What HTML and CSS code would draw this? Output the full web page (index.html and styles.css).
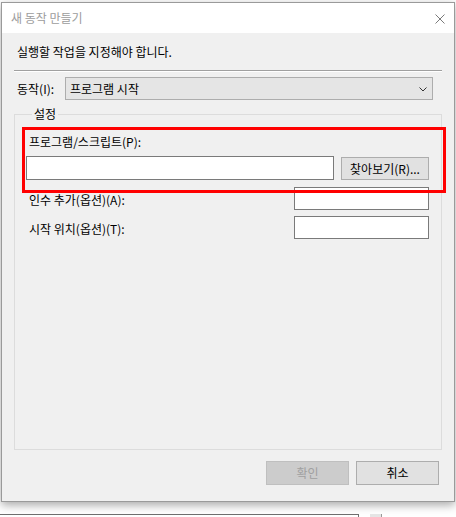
FILE: index.html
```html
<!DOCTYPE html>
<html>
<head>
  <meta charset="UTF-8">
  <title>새 동작 만들기</title>
  <link rel="stylesheet" href="styles.css">
</head>
<body>
  <div class="dialog">
    <header class="titlebar">
      <span class="title">새 동작 만들기</span>
      <svg class="close" width="10" height="10" viewBox="0 0 10 10">
        <path d="M0.5 0.5 L9.5 9.5 M9.5 0.5 L0.5 9.5" stroke="#7a7a7a" stroke-width="1" fill="none"/>
      </svg>
    </header>

    <div class="content">
      <p class="intro">실행할 작업을 지정해야 합니다.</p>
      <div class="separator"></div>

      <div class="action-row">
        <label class="action-label">동작(I):</label>
        <div class="combo">
          <span>프로그램 시작</span>
          <svg width="8" height="5" viewBox="0 0 8 5">
            <path d="M0.5 0.5 L4 4 L7.5 0.5" stroke="#333" stroke-width="1" fill="none"/>
          </svg>
        </div>
      </div>

      <fieldset class="group">
        <legend>설정</legend>
        <label class="field-label">프로그램/스크립트(P):</label>
        <div class="program-row">
          <div class="textbox textbox-wide"></div>
          <button class="btn btn-browse">찾아보기(R)...</button>
        </div>
        <div class="option-row option-args">
          <label class="field-label">인수 추가(옵션)(A):</label>
          <div class="textbox textbox-small"></div>
        </div>
        <div class="option-row option-start">
          <label class="field-label">시작 위치(옵션)(T):</label>
          <div class="textbox textbox-small"></div>
        </div>
      </fieldset>

      <div class="actions">
        <button class="btn btn-disabled">확인</button>
        <button class="btn">취소</button>
      </div>
    </div>

    <div class="highlight"></div>
  </div>

  <div class="backdrop">
    <div class="backdrop-panel"></div>
    <div class="backdrop-scroll"></div>
  </div>
</body>
</html>
```

FILE: styles.css
```css
* {
  box-sizing: border-box;
  margin: 0;
  padding: 0;
}

body {
  font-family: "Noto Sans CJK KR", "Noto Sans", sans-serif;
  font-size: 12px;
  line-height: 16px;
  color: #000;
  background: #ffffff;
  width: 456px;
  height: 517px;
  overflow: hidden;
}

/* Dialog window */
.dialog {
  position: relative;
  margin: 2px 0 0 1px;
  width: 454px;
  height: 500px;
  border: 1px solid #9a9a9a;
  background: #f0f0f0;
  box-shadow: 0 3px 9px rgba(0, 0, 0, 0.35);
  display: flex;
  flex-direction: column;
}

.titlebar {
  height: 30px;
  background: #ffffff;
  display: flex;
  justify-content: space-between;
  align-items: center;
  padding: 0 9px 0 9px;
  flex-shrink: 0;
}

.title {
  color: #9c9c9c;
  font-size: 12px;
}

.close {
  margin-top: 1px;
}

/* Content */
.content {
  flex: 1;
  display: flex;
  flex-direction: column;
  padding: 11px 14px 16px 12px;
}

.intro {
  padding-left: 3px;
}

.separator {
  margin-top: 10px;
  width: 428px;
  height: 2px;
  border-top: 1px solid #a0a0a0;
  border-bottom: 1px solid #ffffff;
}

.action-row {
  margin-top: 5px;
  display: flex;
  align-items: center;
}

.action-label {
  width: 51px;
  padding-left: 3px;
}

.combo {
  width: 368px;
  height: 23px;
  background: #e5e5e5;
  border: 1px solid #adadad;
  display: flex;
  justify-content: space-between;
  align-items: center;
  padding: 0 5px 0 4px;
}

.combo svg {
  margin-top: 1px;
}

/* Group box */
.group {
  flex: 1;
  margin-top: 6px;
  width: 428px;
  border: 1px solid #dcdcdc;
  padding: 12px 12px 0 11px;
  min-width: 0;
}

.group legend {
  margin-left: 6px;
  padding: 0 2px;
  line-height: 16px;
}

.field-label {
  display: block;
  padding-left: 3px;
}

.program-row {
  margin-top: 6px;
  display: flex;
  align-items: flex-start;
  gap: 7px;
}

.textbox {
  background: #ffffff;
  border: 1px solid #7a7a7a;
  height: 23px;
}

.textbox-wide {
  width: 308px;
  height: 24px;
}

.textbox-small {
  width: 135px;
}

.option-row {
  display: flex;
  justify-content: space-between;
  align-items: center;
}

.option-row .field-label {
  margin-top: 2px;
}

.option-args {
  margin-top: 7px;
}

.option-start {
  margin-top: 6px;
}

/* Buttons */
.btn {
  font-family: inherit;
  font-size: 12px;
  color: #000;
  background: #e1e1e1;
  border: 1px solid #adadad;
  width: 83px;
  height: 24px;
  line-height: 16px;
}

.btn-browse {
  margin-top: 1px;
  width: 88px;
  height: 23px;
}

.btn-disabled {
  background: #cccccc;
  border-color: #bfbfbf;
  color: #a0a0a0;
}

.actions {
  margin-top: 11px;
  display: flex;
  justify-content: flex-end;
  gap: 7px;
  padding-right: 1px;
}

/* Red annotation over the program field */
.highlight {
  position: absolute;
  left: 20px;
  top: 124px;
  width: 424px;
  height: 66px;
  border: 3px solid #ff0000;
  pointer-events: none;
}

/* Window behind the dialog */
.backdrop {
  margin-top: 12px;
  display: flex;
  align-items: flex-start;
}

.backdrop-panel {
  width: 359px;
  height: 4px;
  border-top: 1px solid #6f6f6f;
  border-right: 1px solid #6f6f6f;
}

.backdrop-scroll {
  margin-left: 11px;
  width: 12px;
  height: 4px;
  background: #e6e6e6;
  border-right: 1px solid #9a9a9a;
}
```
